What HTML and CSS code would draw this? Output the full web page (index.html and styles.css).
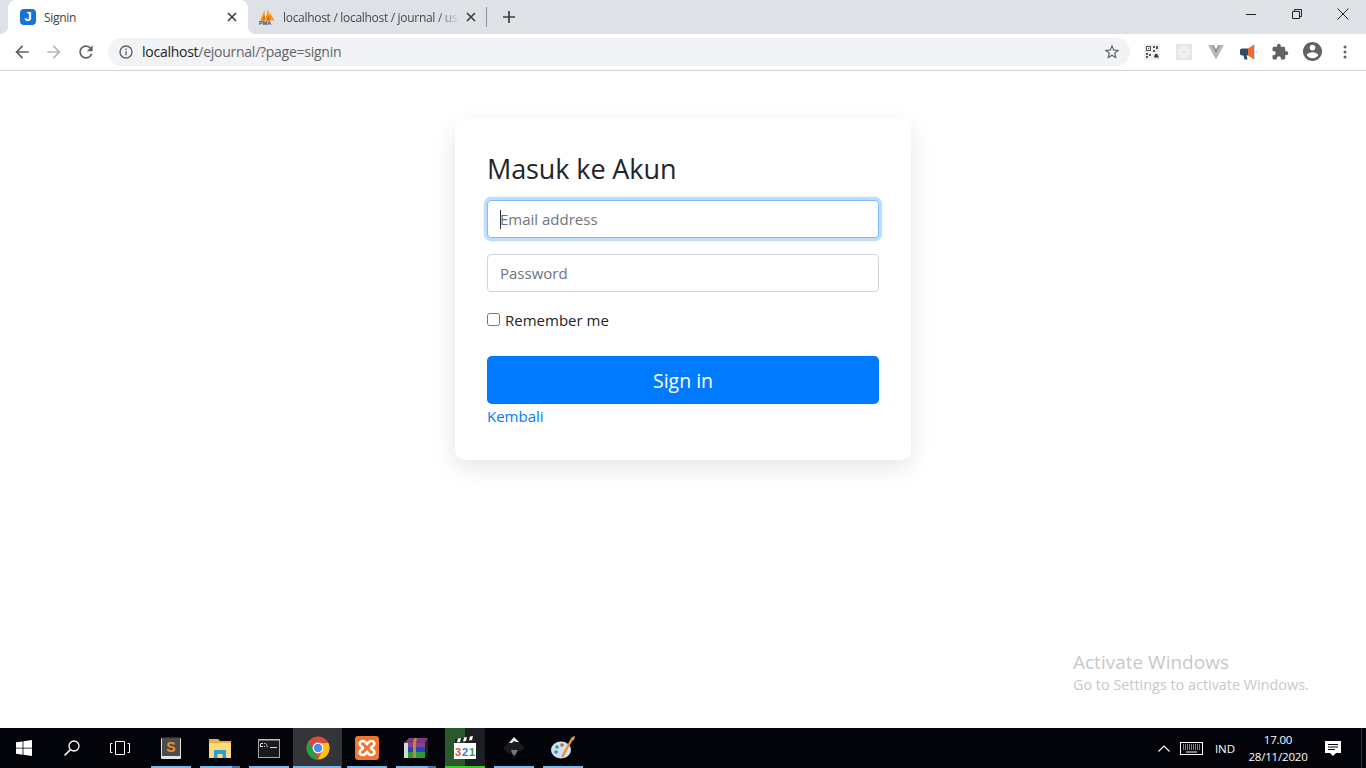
FILE: index.html
```html
<!DOCTYPE html>
<html lang="id">
<head>
<meta charset="utf-8">
<title>Signin</title>
<link rel="stylesheet" href="styles.css">
</head>
<body>
<div class="screen">
  <header class="tabstrip">
    <div class="tab tab-active">
      <span class="fav-j">J</span>
      <span class="tab-title">Signin</span>
      <svg class="tab-x" viewBox="0 0 10 10"><path d="M1 1l8 8M9 1l-8 8" stroke="#3c4043" stroke-width="1.7" fill="none"/></svg>
    </div>
    <div class="tab tab-other">
      <svg class="fav-pma" viewBox="0 0 16 16"><path d="M1 11.500L5.500 1l.5 10.500zM6 11.500L9 0l2 11.500zM10 11.500L10.500 3l5 8.500z" fill="#f29b1d"/><path d="M3 11.500l2.500-6 .5 6zM7.500 11.500l2-6 1.500 6z" fill="#d9690f"/><text x="0" y="16" class="pma-text">PMA</text></svg>
      <span class="tab-title tab-title-fade">localhost / localhost / journal / us</span>
      <svg class="tab-x" viewBox="0 0 10 10"><path d="M1 1l8 8M9 1l-8 8" stroke="#3c4043" stroke-width="1.7" fill="none"/></svg>
    </div>
    <span class="tab-sep"></span>
    <svg class="new-tab" viewBox="0 0 12 12"><path d="M6 0v12M0 6h12" stroke="#3c4043" stroke-width="1.7" fill="none"/></svg>
    <div class="win-controls">
      <div class="win-btn"><svg viewBox="0 0 10 10" class="win-ico"><path d="M0 5.500h10" stroke="#222" fill="none"/></svg></div>
      <div class="win-btn"><svg viewBox="0 0 10 10" class="win-ico"><path d="M.5 2.500h7v7h-7zM2.500 2.500v-2h7v7h-2" stroke="#222" fill="none"/></svg></div>
      <div class="win-btn"><svg viewBox="0 0 12 12" class="win-ico-lg"><path d="M.5.5l11 11M11.500.5l-11 11" stroke="#222" fill="none"/></svg></div>
    </div>
  </header>

  <nav class="toolbar">
    <div class="tool"><svg class="ico" viewBox="0 0 24 24"><path fill="#5f6368" d="M20 11H7.830l5.590-5.590L12 4l-8 8 8 8 1.410-1.410L7.830 13H20v-2z"/></svg></div>
    <div class="tool"><svg class="ico" viewBox="0 0 24 24"><path fill="#b4b6b9" d="M4 11h12.170l-5.590-5.590L12 4l8 8-8 8-1.410-1.410L16.170 13H4v-2z"/></svg></div>
    <div class="tool"><svg class="ico" viewBox="0 0 24 24"><path fill="#5f6368" d="M17.650 6.350C16.200 4.900 14.210 4 12 4c-4.420 0-7.990 3.580-7.990 8s3.570 8 7.990 8c3.730 0 6.840-2.550 7.730-6h-2.080c-.82 2.330-3.040 4-5.650 4-3.310 0-6-2.690-6-6s2.690-6 6-6c1.660 0 3.140.69 4.220 1.780L13 11h7V4l-2.350 2.350z"/></svg></div>
    <div class="omnibox">
      <svg class="info" viewBox="0 0 14 14"><circle cx="7" cy="7" r="6" fill="none" stroke="#5f6368" stroke-width="1.400"/><path d="M6.300 6.200h1.400v4H6.300zM6.300 3.600h1.400v1.400H6.300z" fill="#5f6368"/></svg>
      <span class="url"><span class="url-host">localhost</span>/ejournal/?page=signin</span>
      <svg class="star" viewBox="0 0 24 24"><path fill="#5f6368" d="M22 9.240l-7.190-.62L12 2 9.190 8.630 2 9.240l5.460 4.730L5.820 21 12 17.270 18.180 21l-1.630-7.030L22 9.240zM12 15.400l-3.760 2.270 1-4.280-3.320-2.880 4.380-.38L12 6.100l1.710 4.040 4.380.38-3.320 2.880 1 4.280L12 15.400z"/></svg>
    </div>
    <div class="tool">
      <svg class="ext" viewBox="0 0 16 16"><rect width="16" height="16" fill="#eeeeee"/><path fill="#555" d="M2 2h5v5H2zM9 2h2v2H9zM12 2h2v3h-2zM9 6h2v2H9zM2 9h2v2H2zM5 10h2v2H5zM2 12h2v2H2z"/><path fill="#333" d="M10 13.500l1-3.500 2 0 2 3.500z"/><path fill="#eee" d="M3 3h3v3H3z"/><path fill="#555" d="M4 4h1v1H4z"/></svg>
    </div>
    <div class="tool">
      <svg class="ext" viewBox="0 0 16 16"><rect width="16" height="16" fill="#e6e6e6"/><g fill="none" stroke="#f4f4f4" stroke-width="1.200"><ellipse cx="8" cy="8" rx="6" ry="2.600"/><ellipse cx="8" cy="8" rx="6" ry="2.600" transform="rotate(60 8 8)"/><ellipse cx="8" cy="8" rx="6" ry="2.600" transform="rotate(120 8 8)"/></g></svg>
    </div>
    <div class="tool">
      <svg class="ext" viewBox="0 0 16 16"><path fill="#b8b8b8" d="M0 1h5.500L8 5.500 10.500 1H16L8 15.500z"/><path fill="#929292" d="M4 1h1.500L8 5.500 10.500 1H12L8 9.500z"/></svg>
    </div>
    <div class="tool">
      <svg class="ext-wide" viewBox="0 0 17 16"><path fill="#2f4a68" d="M0 6.500Q0 4.500 2 4.500h6v7H6.500l1 4h-3l-1-4H2Q0 11.500 0 9.500z"/><path fill="#f26a2e" d="M8 4.500l6-4v15l-6-4z"/><path fill="#bcdcf4" d="M14 .5h1v15h-1zM15.500 7h1.500v2h-1.500z"/></svg>
    </div>
    <div class="tool"><svg class="ico-ext" viewBox="0 0 24 24"><path fill="#5f6368" d="M20.500 11H19V7c0-1.100-.9-2-2-2h-4V3.500C13 2.120 11.880 1 10.500 1S8 2.120 8 3.500V5H4c-1.100 0-1.990.9-1.990 2v3.800H3.500c1.490 0 2.700 1.210 2.700 2.700s-1.210 2.700-2.700 2.700H2V20c0 1.100.9 2 2 2h3.800v-1.500c0-1.490 1.210-2.700 2.700-2.700 1.490 0 2.700 1.210 2.700 2.700V22H17c1.100 0 2-.9 2-2v-4h1.500c1.380 0 2.500-1.120 2.500-2.500S21.880 11 20.500 11z"/></svg></div>
    <div class="tool"><svg class="ico-acc" viewBox="2 2 20 20"><path fill="#5f6368" d="M12 2C6.480 2 2 6.480 2 12s4.480 10 10 10 10-4.480 10-10S17.520 2 12 2zm0 3c1.660 0 3 1.340 3 3s-1.340 3-3 3-3-1.340-3-3 1.340-3 3-3zm0 14.200c-2.500 0-4.710-1.280-6-3.220.03-1.990 4-3.080 6-3.080 1.990 0 5.970 1.090 6 3.080-1.290 1.940-3.500 3.220-6 3.220z"/></svg></div>
    <div class="tool tool-menu"><svg class="dots" viewBox="0 0 4 14"><circle cx="2" cy="2" r="1.500" fill="#5f6368"/><circle cx="2" cy="7" r="1.500" fill="#5f6368"/><circle cx="2" cy="12" r="1.500" fill="#5f6368"/></svg></div>
  </nav>

  <main class="page">
    <form class="card">
      <h1 class="card-title">Masuk ke Akun</h1>
      <div class="field">
        <input class="input input-focus" type="email" placeholder="Email address">
        <span class="caret"></span>
      </div>
      <div class="field">
        <input class="input" type="password" placeholder="Password">
      </div>
      <label class="check"><input class="check-box" type="checkbox"> Remember me</label>
      <button class="btn" type="button">Sign in</button>
      <a class="back" href="#">Kembali</a>
    </form>
    <div class="activate">
      <div class="activate-title">Activate Windows</div>
      <div class="activate-sub">Go to Settings to activate Windows.</div>
    </div>
  </main>

  <footer class="taskbar">
    <div class="sys"><svg class="sys-ico" viewBox="0 0 16 16"><path fill="#fff" d="M0 2.300l6.600-.9v6.300H0zM7.400 1.300L16 0v7.700H7.400zM0 8.400h6.600v6.300L0 13.800zM7.400 8.400H16V16l-8.600-1.200z"/></svg></div>
    <div class="sys"><svg class="sys-ico" viewBox="0 0 16 16"><circle cx="10" cy="6" r="5" fill="none" stroke="#fff" stroke-width="1.300"/><path d="M6.300 9.700L.6 15.400" stroke="#fff" stroke-width="1.500"/></svg></div>
    <div class="sys sys-view"><svg class="sys-view-ico" viewBox="0 0 20 14"><path d="M5.500.5h9v13h-9zM2.500 2.500H.5v9h2M17.500 2.500h2v9h-2" fill="none" stroke="#fff"/></svg></div>

    <div class="app app-on"><svg class="app-ico" viewBox="0 0 24 24"><path fill="#e4e4e4" d="M3 2h18q1 0 1 1v19q0 1-1 1H3q-1 0-1-1V3q0-1 1-1z"/><path fill="#4c4c4c" d="M3.500 1.500h17q.5 0 .5.500v18H3V2q0-.5.5-.5z"/><text x="12" y="16" class="sublime">S</text></svg></div>
    <div class="app app-on app-stack"><svg class="app-ico" viewBox="0 0 24 24"><path fill="#e2b34a" d="M1 3h9l2 2h11v4H1z"/><path fill="#fbdc7c" d="M1 7h22v15H1z"/><path fill="#2c9fd9" d="M6 14h12v8h-3.500v-4h-5v4H6z"/></svg></div>
    <div class="app app-on"><svg class="app-ico" viewBox="0 0 24 24"><rect x="1.500" y="3.500" width="21" height="18" fill="#1a1a1a" stroke="#a8a8a8"/><rect x="1" y="3" width="22" height="1.500" fill="#c0c0c0"/><path d="M4 7h2v1H4v2h2v1H3V8zM7 7h1v1H7zM7 10h1v1H7zM9 7l2 4h-1L8.500 7zM13 11h7v1h-7z" fill="#ddd"/></svg></div>
    <div class="app app-on app-active"><svg class="app-ico" viewBox="0 0 24 24"><circle cx="12" cy="12" r="11.500" fill="#dd4b3e"/><path fill="#fbc116" d="M12 7h10.400A11.500 11.500 0 0 1 12 23.500L17 13z"/><path fill="#1fa149" d="M.5 12A11.500 11.500 0 0 1 2.700 5.200L7.500 14.500 12 23.500A11.500 11.500 0 0 1 .5 12z"/><circle cx="12" cy="12" r="5.400" fill="#fff"/><circle cx="12" cy="12" r="4.200" fill="#4a8af4"/></svg></div>
    <div class="app app-on"><svg class="app-ico" viewBox="0 0 24 24"><rect width="24" height="24" rx="3" fill="#f0772f"/><path d="M8 5C5 5 4 7 5 9C6 11 8 11 8 12C8 13 6 13 5 15C4 17 5 19 8 19C10 19 11 17 12 16C13 17 14 19 16 19C19 19 20 17 19 15C18 13 16 13 16 12C16 11 18 11 19 9C20 7 19 5 16 5C14 5 13 7 12 8C11 7 10 5 8 5Z" fill="none" stroke="#fff" stroke-width="2.600"/></svg></div>
    <div class="app app-on app-stack"><svg class="app-ico-wide" viewBox="0 0 26 24"><path fill="#7b3a80" d="M6 2h19l-3 5H1z"/><path fill="#8a3f8e" d="M1 7h21v4H1z"/><path fill="#2743b8" d="M1 11h21v5H1z"/><path fill="#2c9a3a" d="M1 16h21v6H1z"/><path fill="#d7d7d7" d="M1 7h4v15H1z"/><path fill="#222" d="M22 7l3-5v15l-3 5z"/><path fill="#b98a44" d="M11 2h3l-1 5v15h-3V7z"/></svg></div>
    <div class="app app-on app-green"><svg class="app-ico" viewBox="0 0 24 24"><path fill="#fff" d="M1 7h22v16H1z"/><path fill="#222" d="M2 3l19-3 1 5-20 2z"/><path fill="#fff" d="M5 2.500l3-.5-1 4-3 .5zM11 1.500l3-.5-1 4-3 .5zM17 .5l3-.5-1 4-3 .5z"/><text x="2" y="20" class="clap clap-r">3</text><text x="9" y="20" class="clap clap-b">2</text><text x="16" y="20" class="clap clap-g">1</text></svg></div>
    <div class="app app-on"><svg class="app-ico" viewBox="0 0 24 24"><path fill="#1b1b1b" d="M12 1L23 12l-5 3-2-1-2 6-3 3-1-6-3 1-6-6z"/><path fill="#e8eef4" d="M12 1l5 5-3 0-2-1-2 2-3 0z"/><path fill="#6a7d8c" d="M9 14h7l-3 5-2 0z"/></svg></div>
    <div class="app app-on"><svg class="app-ico" viewBox="0 0 24 24"><ellipse cx="10" cy="14" rx="10" ry="8.500" fill="#cfe3f2"/><circle cx="6" cy="11" r="1.800" fill="#3aa357"/><circle cx="11" cy="9" r="1.800" fill="#e2574c"/><circle cx="5" cy="16" r="1.800" fill="#3f7fd0"/><path d="M11 21L21 3" stroke="#f0902f" stroke-width="2.400"/><path d="M19 5l2-4 3-1-1 4z" fill="#c9a070"/></svg></div>

    <div class="tray">
      <svg class="tray-up" viewBox="0 0 12 7"><path d="M.5 6.500L6 1l5.500 5.500" fill="none" stroke="#fff" stroke-width="1.100"/></svg>
      <svg class="tray-kb" viewBox="0 0 23 13"><rect x=".5" y=".5" width="22" height="12" fill="none" stroke="#fff"/><path d="M3 3h17M3 5h17M3 7h17" stroke="#fff" stroke-dasharray="1 1" fill="none"/><path d="M6 10h11" stroke="#fff" fill="none"/></svg>
      <span class="tray-lang">IND</span>
      <div class="clock"><div>17.00</div><div>28/11/2020</div></div>
      <svg class="tray-note" viewBox="0 0 16 15"><path fill="#fff" d="M0 0h16v12H11l-3 3-3-3H0z"/><path stroke="#000" fill="none" d="M3 3.500h10M3 6h10M3 8.500h7"/></svg>
      <span class="tray-edge"></span>
    </div>
  </footer>
</div>
</body>
</html>
```

FILE: styles.css
```css
* { box-sizing: border-box; }
html, body { margin: 0; height: 100%; }
body { font-family: "Open Sans", "Noto Sans", sans-serif; color: #212529; background: #fff; overflow: hidden; }
.screen { display: flex; flex-direction: column; width: 1366px; height: 768px; }

/* tab strip */
.tabstrip { display: flex; align-items: center; height: 34px; padding-left: 8px; background: #dee1e6; flex: none; }
.tab { display: flex; align-items: center; width: 240px; height: 34px; position: relative; }
.tab-active { background: #fff; border-radius: 8px 8px 0 0; padding: 0 11px 0 12px; }
.tab-other { padding: 0 10px 0 11px; width: 238px; }
.tab-active::before, .tab-active::after { content: ""; position: absolute; bottom: 0; width: 8px; height: 8px; }
.tab-active::before { left: -8px; background: radial-gradient(circle at 0 0, transparent 8px, #fff 8.5px); }
.tab-active::after { right: -8px; background: radial-gradient(circle at 100% 0, transparent 8px, #fff 8.5px); }
.fav-j { width: 16px; height: 16px; background: #1a6fd8; border-radius: 4px; color: #fff; font: 700 13px/16px "Liberation Sans", sans-serif; text-align: center; flex: none; }
.fav-pma { width: 16px; height: 16px; flex: none; }
.pma-text { font: 700 5.500px "Liberation Sans", sans-serif; fill: #444; }
.tab-title { font-size: 12px; color: #3c4043; margin-left: 8px; flex: 1; white-space: nowrap; overflow: hidden; letter-spacing: -.3px; }
.tab-title-fade { color: #45484c; -webkit-mask-image: linear-gradient(to right, #000 88%, transparent); mask-image: linear-gradient(to right, #000 88%, transparent); }
.tab-x { width: 10px; height: 10px; flex: none; margin-left: 7px; }
.tab-sep { width: 1px; height: 20px; background: #8e9297; }
.new-tab { width: 12px; height: 12px; margin-left: 16px; flex: none; }
.win-controls { display: flex; margin-left: auto; }
.win-btn { width: 46px; height: 28px; display: flex; align-items: center; justify-content: center; margin-bottom: 6px; }
.win-ico { width: 10px; height: 10px; }
.win-ico-lg { width: 12px; height: 12px; }

/* toolbar */
.toolbar { display: flex; align-items: center; height: 37px; padding: 0 5px 1px 6px; border-bottom: 1px solid #d3d3d3; background: #fff; flex: none; }
.tool { width: 32px; height: 28px; display: flex; align-items: center; justify-content: center; flex: none; }
.tool-menu { width: 33px; }
.ico { width: 20px; height: 20px; }
.ext { width: 16px; height: 16px; }
.ext-wide { width: 17px; height: 16px; }
.ico-ext { width: 18px; height: 18px; }
.ico-acc { width: 19px; height: 19px; }
.dots { width: 4px; height: 14px; }
.omnibox { flex: 1; display: flex; align-items: center; height: 28px; margin: 0 6px; padding: 0 9px 0 11px; background: #f1f3f4; border-radius: 14px; }
.info { width: 14px; height: 14px; flex: none; }
.url { font-size: 14px; color: #5f6368; margin-left: 9px; flex: 1; letter-spacing: -.26px; }
.url-host { color: #202124; }
.star { width: 18px; height: 18px; flex: none; }

/* page */
.page { flex: 1; position: relative; padding-top: 48px; background: #fff; }
.card { display: flex; flex-direction: column; width: 456px; height: 341px; margin: 0 auto; padding: 32px; background: #fff; border-radius: 10px; box-shadow: 0 8px 24px rgba(0,0,0,.1); }
.card-title { margin: 0 0 16px; height: 33px; font-size: 27px; font-weight: 400; line-height: 36px; letter-spacing: -.1px; color: #212529; }
.field { position: relative; margin-bottom: 16px; }
.input { display: block; width: 100%; height: 38px; padding: 6px 12px; border: 1px solid #ced4da; border-radius: 4px; font: 400 15px "Open Sans", sans-serif; color: #495057; background: #fff; outline: 0; }
.input::placeholder { color: #6c757d; opacity: 1; }
.input-focus { border-color: #80bdff; box-shadow: 0 0 0 3.200px rgba(0,123,255,.25); }
.caret { position: absolute; left: 13px; top: 10px; width: 1px; height: 19px; background: #333; }
.check { display: flex; align-items: center; height: 24px; margin-bottom: 24px; font-size: 15px; color: #212529; }
.check-box { width: 13px; height: 13px; margin: 0 5px 1px 0; }
.btn { height: 48px; padding: 1px 0 0; border: 0; border-radius: 4.800px; background: #007bff; color: #fff; font: 400 19.500px "Open Sans", sans-serif; flex: none; }
.back { height: 24px; font-size: 15px; line-height: 24px; color: #007bff; text-decoration: none; }

/* watermark */
.activate { position: absolute; left: 1073px; top: 578px; color: #c8c8c8; }
.activate-title { font-size: 19px; line-height: 26px; }
.activate-sub { font-size: 14.400px; line-height: 20px; }

/* taskbar */
.taskbar { display: flex; align-items: stretch; height: 40px; background: #02040a; flex: none; }
.sys { width: 48px; display: flex; align-items: center; justify-content: center; flex: none; }
.sys-view { margin-right: 2px; }
.sys-ico { width: 16px; height: 16px; }
.sys-view-ico { width: 20px; height: 14px; }
.app { position: relative; width: 49px; display: flex; align-items: center; justify-content: center; flex: none; }
.app-ico { width: 24px; height: 24px; }
.app-ico-wide { width: 26px; height: 24px; }
.app-on::after { content: ""; position: absolute; left: 5px; right: 4px; bottom: 0; height: 2px; background: #76b9ed; }
.app-active { background: #333538; }
.app-active::after { left: 0; right: 1px; }
.app-stack::before { content: ""; position: absolute; right: 4px; bottom: 0; width: 8px; height: 2px; background: #3f7aa8; z-index: 1; }
.app-green { background: linear-gradient(to right, #2a5a2c 50%, #1c1f22 50%); width: 40px; margin: 0 4px 0 5px; }
.app-green::after { left: 0; right: 0; background: #33cc22; }
.sublime { font: 700 14px "Liberation Sans", sans-serif; fill: #f0902f; text-anchor: middle; }
.clap { font: 700 11px "Liberation Sans", sans-serif; }
.clap-r { fill: #d9542b; }
.clap-b { fill: #2f7fd0; }
.clap-g { fill: #3c9a3c; }
.tray { display: flex; align-items: center; margin-left: auto; color: #fff; font-size: 11.500px; }
.tray-up { width: 12px; height: 7px; }
.tray-kb { width: 23px; height: 13px; margin-left: 10px; }
.tray-lang { width: 38px; margin-left: 3px; text-align: center; }
.clock { width: 68px; text-align: center; line-height: 17px; letter-spacing: -.2px; }
.tray-note { width: 16px; height: 15px; margin-left: 13px; }
.tray-edge { width: 1px; height: 40px; background: #333; margin-left: 20px; margin-right: 4px; }
```
